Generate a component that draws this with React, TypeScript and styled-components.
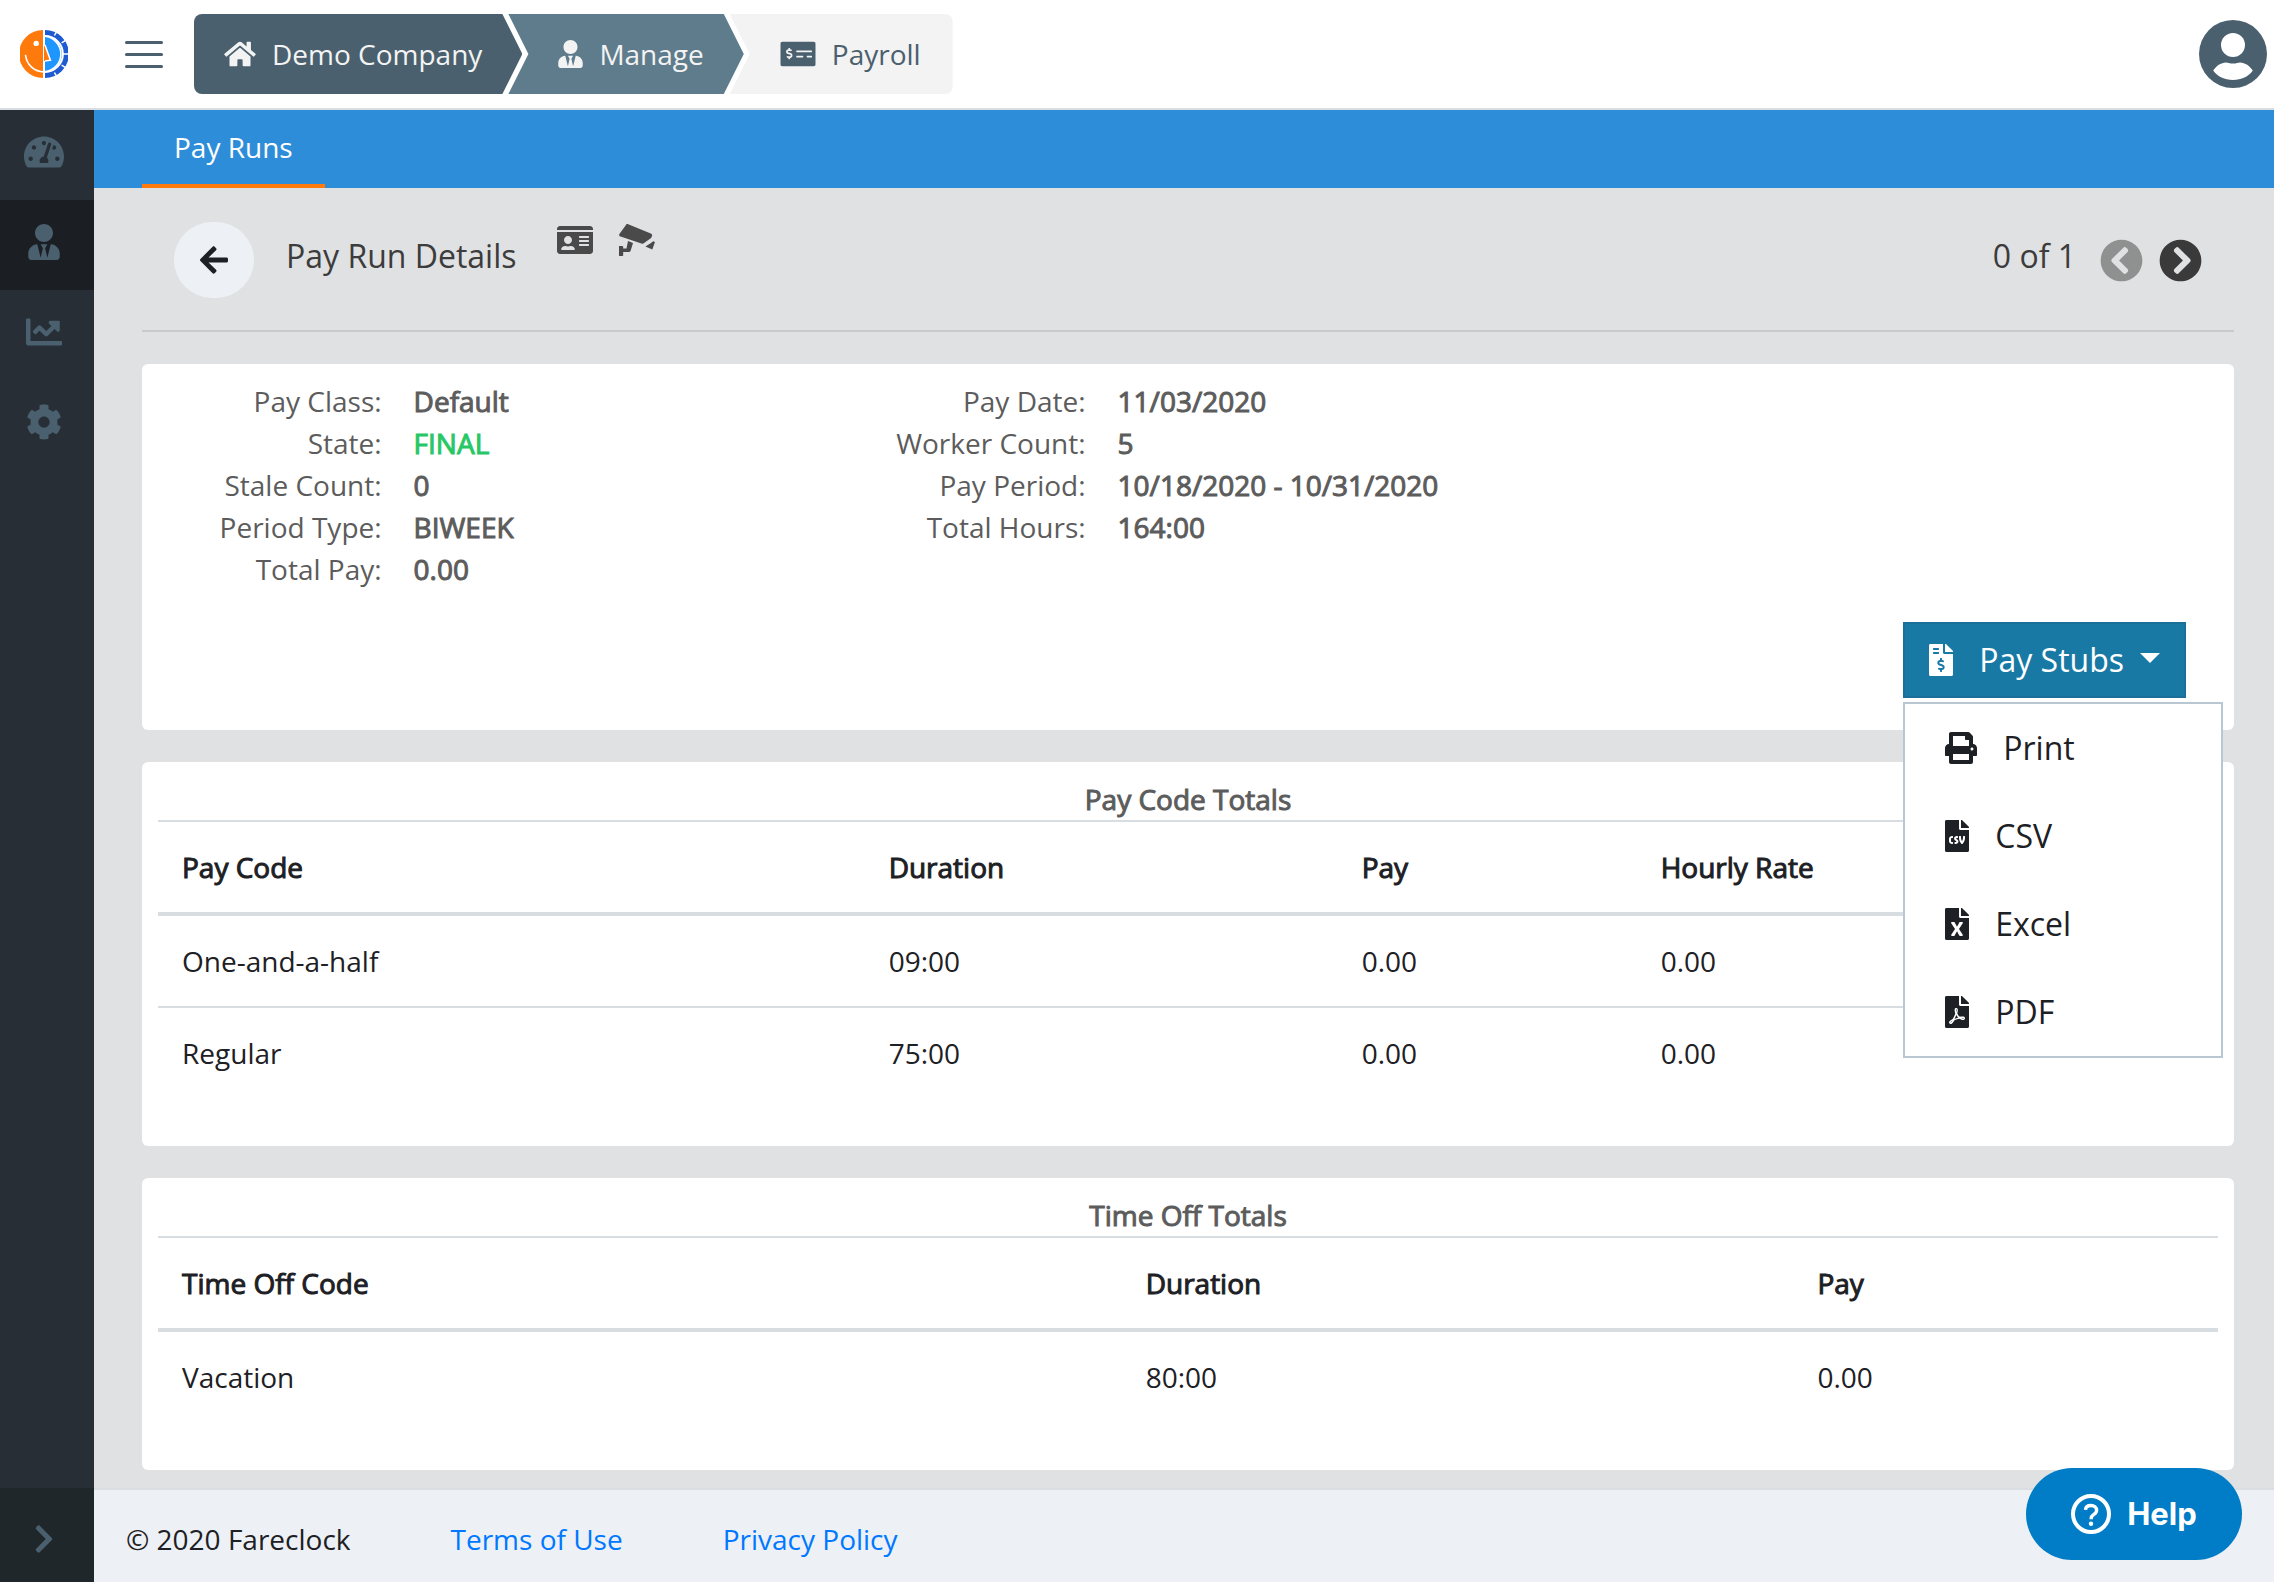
import React from "react";
import styled, { createGlobalStyle, css } from "styled-components";
import {
  FaArrowLeft,
  FaChartLine,
  FaChevronCircleLeft,
  FaChevronCircleRight,
  FaChevronRight,
  FaCog,
  FaFileCsv,
  FaFileExcel,
  FaFileInvoiceDollar,
  FaFilePdf,
  FaHome,
  FaIdCard,
  FaMoneyCheckAlt,
  FaPrint,
  FaTachometerAlt,
  FaUserTie,
} from "react-icons/fa";

const slate = "#4a606e";
const ink = "#1d2024";
const rule = "#d8dde2";

const GlobalStyle = createGlobalStyle`
  *, *::before, *::after { box-sizing: border-box; }
  body {
    margin: 0;
    background: #e0e1e3;
    color: ${ink};
    font: 400 28px/42px "Open Sans", "Noto Sans", sans-serif;
  }
  button { font: inherit; color: inherit; border: 0; padding: 0; background: none; cursor: pointer; }
  a { text-decoration: none; }
  svg { display: block; flex: none; }
`;

/* Emphasis drawn with the regular face, thickened by an outline. */
const emphasis = css`
  font-weight: 400;
  -webkit-text-stroke: 1px currentColor;
`;

/* Icons come in a square box; this gives each one the width of its drawing. */
const Glyph = styled.span<{ $width: number }>`
  display: block;
  flex: none;
  width: ${(p) => p.$width}px;
  svg { width: 100%; }
`;

const Page = styled.div`
  display: flex;
  flex-direction: column;
  min-height: 100vh;
`;

const TopBar = styled.header`
  display: flex;
  align-items: center;
  height: 110px;
  padding: 0 7px 0 20px;
  background: #fff;
  border-bottom: 2px solid ${rule};
`;

const MenuToggle = styled.button`
  display: grid;
  gap: 9px;
  width: 38px;
  margin: 0 31px 0 57px;
  span {
    height: 3px;
    border-radius: 2px;
    background: ${slate};
  }
`;

const Crumbs = styled.nav`
  display: flex;
  flex: 1;
`;

const Crumb = styled.a<{ $bg: string; $color: string; $place: "first" | "middle" | "last" }>`
  display: flex;
  align-items: center;
  gap: 16px;
  height: 80px;
  padding: 0 40px 0 50px;
  background: ${(p) => p.$bg};
  color: ${(p) => p.$color};
  ${(p) =>
    p.$place === "first" &&
    css`
      padding-left: 30px;
      border-radius: 8px 0 0 8px;
      clip-path: polygon(0 0, calc(100% - 20px) 0, 100% 50%, calc(100% - 20px) 100%, 0 100%);
    `}
  ${(p) =>
    p.$place === "middle" &&
    css`
      margin-left: -14px;
      clip-path: polygon(0 0, calc(100% - 20px) 0, 100% 50%, calc(100% - 20px) 100%, 0 100%, 20px 50%);
    `}
  ${(p) =>
    p.$place === "last" &&
    css`
      margin-left: -14px;
      padding-right: 32px;
      border-radius: 0 8px 8px 0;
      clip-path: polygon(0 0, 100% 0, 100% 100%, 0 100%, 20px 50%);
    `}
`;

const Body = styled.div`
  display: flex;
  flex: 1;
`;

const SideBar = styled.nav`
  display: flex;
  flex-direction: column;
  flex: none;
  width: 94px;
  background: #272e35;
  color: ${slate};
`;

const SideLink = styled.a<{ $active?: boolean }>`
  display: flex;
  align-items: center;
  justify-content: center;
  height: 90px;
  padding: 0 6px 6px 0;
  font-size: 36px;
  color: ${slate};
  background: ${(p) => (p.$active ? "#1b1f23" : "transparent")};
`;

const SideExpand = styled.button`
  display: flex;
  align-items: center;
  justify-content: center;
  height: 94px;
  margin-top: auto;
  padding: 8px 6px 0 0;
  font-size: 32px;
  color: ${slate};
  background: #20272a;
`;

const Main = styled.div`
  display: flex;
  flex-direction: column;
  flex: 1;
  min-width: 0;
`;

const TabBar = styled.nav`
  display: flex;
  height: 78px;
  padding: 0 48px;
  background: #2e8dd9;
`;

const Tab = styled.a`
  padding: 16px 32px;
  color: #fff;
  border-bottom: 4px solid #ff7a0d;
`;

const Content = styled.main`
  display: flex;
  flex-direction: column;
  flex: 1;
  gap: 32px;
  padding: 0 40px 18px 48px;
`;

const PageHead = styled.div`
  display: flex;
  align-items: center;
  padding: 34px 32px 32px;
  border-bottom: 2px solid #c8cacc;
  color: #3c3c3c;
`;

const BackButton = styled.button`
  display: grid;
  place-items: center;
  width: 80px;
  height: 76px;
  border-radius: 40px;
  background: #edf1f5;
  color: ${ink};
  font-size: 32px;
`;

const PageTitle = styled.h1`
  margin: 0 0 0 32px;
  padding-bottom: 8px;
  font-size: 32px;
  font-weight: 400;
  line-height: 48px;
`;

const HeadTools = styled.div`
  display: flex;
  align-self: flex-start;
  gap: 26px;
  margin-left: 41px;
  font-size: 32px;
  color: #4a4a4a;
  button { height: 36px; }
`;

const Pager = styled.div`
  display: flex;
  align-items: center;
  gap: 16px;
  margin-left: auto;
`;

const PagerText = styled.span`
  padding: 0 8px 8px 0;
  font-size: 32px;
  line-height: 48px;
`;

const PagerButton = styled.button`
  font-size: 43px;
  color: #3a3a3a;
  &:disabled { color: #8f9191; }
`;

const Card = styled.section`
  padding: 16px;
  border-radius: 6px;
  background: #fff;
`;

const Facts = styled.div`
  display: grid;
  grid-template-columns: repeat(3, 1fr);
  margin: 0 -26px 32px;
`;

const FactList = styled.dl`
  display: grid;
  grid-template-columns: 2fr 3fr;
  align-content: start;
  margin: 0;
  color: #5c5c5c;
  dt {
    padding-right: 32px;
    text-align: right;
  }
`;

const Fact = styled.dd<{ $good?: boolean }>`
  margin: 0;
  white-space: nowrap;
  color: ${(p) => (p.$good ? "#28c766" : "inherit")};
  ${emphasis}
`;

const Actions = styled.div`
  display: flex;
  justify-content: flex-end;
  padding: 0 32px 16px 0;
`;

const DropDown = styled.div`
  position: relative;
`;

const DropButton = styled.button`
  display: flex;
  align-items: center;
  height: 76px;
  padding: 0 24px;
  border: 2px solid #1a7098;
  background: #1979a5;
  color: #fff;
  font-size: 32px;
  line-height: 48px;
`;

const DropLabel = styled.span`
  margin: 0 16px 0 26px;
`;

const Caret = styled.i`
  margin-bottom: 4px;
  border: 10px solid transparent;
  border-top-color: #fff;
  border-bottom: 0;
`;

const Menu = styled.div`
  position: absolute;
  z-index: 2;
  top: calc(100% + 4px);
  left: 0;
  width: 320px;
  border: 2px solid #b8c7d2;
  background: #fff;
`;

const MenuItem = styled.button`
  display: flex;
  align-items: center;
  gap: 26px;
  width: 100%;
  height: 88px;
  padding: 0 40px;
  font-size: 32px;
  line-height: 48px;
`;

const CardTitle = styled.h2`
  margin: 0;
  font-size: 28px;
  text-align: center;
  color: #5c5c5c;
  ${emphasis}
`;

const Table = styled.table`
  width: 100%;
  margin-bottom: 32px;
  border-spacing: 0;
  text-align: left;
  th, td {
    padding: 24px;
    border-top: 2px solid ${rule};
  }
  th {
    border-bottom: 4px solid ${rule};
    ${emphasis}
  }
  tbody tr:first-child td { border-top: 0; }
`;

const Footer = styled.footer`
  display: flex;
  gap: 100px;
  height: 94px;
  padding: 28px 32px 0;
  border-top: 2px solid #dadee2;
  background: #edf1f5;
  a { color: #0078ff; }
`;

const HelpButton = styled.button`
  position: fixed;
  right: 32px;
  bottom: 22px;
  display: flex;
  align-items: center;
  justify-content: center;
  gap: 16px;
  width: 216px;
  height: 92px;
  border-radius: 46px;
  background: #007dc6;
  color: #fff;
  font: 700 31px/40px Inter, "Liberation Sans", sans-serif;
`;

const Logo = () => (
  <svg width="48" height="48" viewBox="0 0 48 48" role="img" aria-label="Fareclock">
    <path d="M23 0a24 24 0 0 0 0 48z" fill="#ff7a0d" />
    <path d="M25 2.6A21.4 21.4 0 0 1 25 45.4" fill="none" stroke="#1f5bd0" strokeWidth="5" />
    <path
      d="M34.4 5.5l1.8-3.2M41.6 12.8l4-2.4M43 24h5M41.6 35.2l4 2.4M34.4 42.5l1.8 3.2"
      stroke="#fff"
      strokeWidth="1.5"
    />
    <path d="M25 7a17 17 0 0 1 0 34z" fill="#1e96ff" />
    <path d="M25 6.3A17.8 17.8 0 0 1 25 41.7" fill="none" stroke="#fff" strokeWidth="1.6" />
    <path d="M24 15l1 0 5.400 15.200-5.400.8-1 0z" fill="#ff7a0d" />
    <path d="M25 15l5.400 15.200-5.400.8" fill="none" stroke="#fff" strokeWidth="1.5" />
    <path d="M5.6 25.5C7 35 14 41.8 24 42" fill="none" stroke="#fff" strokeWidth="1.7" strokeLinecap="round" />
    <path d="M24 0v16M24 31v17" stroke="#fff" strokeWidth="1.8" />
    <circle cx="16.2" cy="13.4" r="2.7" fill="#fff" />
  </svg>
);

const Avatar = () => (
  <svg width="68" height="68" viewBox="0 0 68 68" aria-hidden="true">
    <circle cx="34" cy="34" r="34" fill={slate} />
    <circle cx="34" cy="25" r="12" fill="#fff" />
    <path
      d="M14.2 50.5C17 46 22 42.4 27 42.4c2 0 3.600 1.200 7 1.200s5-1.200 7-1.200c5 0 10 3.600 12.800 8.100C49.500 56.500 42.500 60 34 60s-15.500-3.500-19.800-9.500z"
      fill="#fff"
    />
  </svg>
);

const Camera = () => (
  <svg width="36" height="36" viewBox="0 0 36 36" fill="currentColor" aria-hidden="true">
    <path d="M6.600 3.400C7.200 2.200 8 1.800 9.200 2.300L31.800 11.400c1.300.6 1.700 1.500 1.200 2.700l-.9 2-7 5c-.9.6-1.700.7-2.700.3L1.500 14.500C.3 13.900-.2 13.200.4 12z" />
    <path d="M34.200 19.300l1.800.8-2.700 7.400-6.900-2.900 5.200-3.300z" />
    <path d="M9 19l5 2-2.200 7.200c-.4 1.300-1 1.900-2.400 1.900H4.200v2.900c0 .7-.4 1-1.100 1H0V24h3.100c.7 0 1.100.4 1.100 1.100v1.400H7.500z" />
  </svg>
);

const Question = () => (
  <svg width="40" height="40" viewBox="0 0 40 40" fill="none" stroke="currentColor" aria-hidden="true">
    <circle cx="20" cy="20" r="18" strokeWidth="4" />
    <path
      d="M14.500 15.800c.2-2.700 2.300-4.300 5.500-4.300s5.600 1.800 5.600 4.700c0 2-1 3.100-2.700 4.200-1.900 1.200-2.700 2-2.700 3.800v1"
      strokeWidth="3.400"
    />
    <circle cx="20" cy="29.800" r="2.200" fill="currentColor" stroke="none" />
  </svg>
);

const leftFacts = [
  ["Pay Class:", "Default"],
  ["State:", "FINAL"],
  ["Stale Count:", "0"],
  ["Period Type:", "BIWEEK"],
  ["Total Pay:", "0.00"],
];

const rightFacts = [
  ["Pay Date:", "11/03/2020"],
  ["Worker Count:", "5"],
  ["Pay Period:", "10/18/2020 - 10/31/2020"],
  ["Total Hours:", "164:00"],
];

const exportsList = [
  { label: "Print", Icon: FaPrint, width: 32 },
  { label: "CSV", Icon: FaFileCsv, width: 24 },
  { label: "Excel", Icon: FaFileExcel, width: 24 },
  { label: "PDF", Icon: FaFilePdf, width: 24 },
];

const sideLinks = [
  { label: "Dashboard", Icon: FaTachometerAlt, width: 40 },
  { label: "Manage", Icon: FaUserTie, width: 32, active: true },
  { label: "Reports", Icon: FaChartLine, width: 36 },
  { label: "Settings", Icon: FaCog, width: 36 },
];

const FactColumn = ({ rows }: { rows: string[][] }) => (
  <FactList>
    {rows.map(([label, value]) => (
      <React.Fragment key={label}>
        <dt>{label}</dt>
        <Fact $good={value === "FINAL"}>{value}</Fact>
      </React.Fragment>
    ))}
  </FactList>
);

const TotalsCard = ({ title, columns, rows }: { title: string; columns: string[]; rows: string[][] }) => (
  <Card>
    <CardTitle>{title}</CardTitle>
    <Table aria-label={title}>
      <thead>
        <tr>
          {columns.map((c) => (
            <th key={c} scope="col">{c}</th>
          ))}
        </tr>
      </thead>
      <tbody>
        {rows.map((row) => (
          <tr key={row[0]}>
            {row.map((cell, i) => (
              <td key={i}>{cell}</td>
            ))}
          </tr>
        ))}
      </tbody>
    </Table>
  </Card>
);

export default function App() {
  const [open, setOpen] = React.useState(true);
  return (
    <Page>
      <GlobalStyle />
      <TopBar>
        <Logo />
        <MenuToggle aria-label="Toggle menu">
          <span />
          <span />
          <span />
        </MenuToggle>
        <Crumbs aria-label="Breadcrumb">
          <Crumb href="#" $bg={slate} $color="#f3f3f3" $place="first">
            <Glyph $width={32}>
              <FaHome />
            </Glyph>
            Demo Company
          </Crumb>
          <Crumb href="#" $bg="#5e7c8b" $color="#f3f3f3" $place="middle">
            <Glyph $width={25}>
              <FaUserTie />
            </Glyph>
            Manage
          </Crumb>
          <Crumb href="#" $bg="#f3f3f3" $color={slate} $place="last">
            <Glyph $width={36}>
              <FaMoneyCheckAlt />
            </Glyph>
            Payroll
          </Crumb>
        </Crumbs>
        <button aria-label="Account">
          <Avatar />
        </button>
      </TopBar>
      <Body>
        <SideBar aria-label="Main">
          {sideLinks.map(({ label, Icon, width, active }) => (
            <SideLink key={label} href="#" aria-label={label} $active={active}>
              <Glyph $width={width}>
                <Icon />
              </Glyph>
            </SideLink>
          ))}
          <SideExpand aria-label="Expand sidebar">
            <FaChevronRight />
          </SideExpand>
        </SideBar>
        <Main>
          <TabBar>
            <Tab href="#">Pay Runs</Tab>
          </TabBar>
          <Content>
            <PageHead>
              <BackButton aria-label="Back">
                <FaArrowLeft />
              </BackButton>
              <PageTitle>Pay Run Details</PageTitle>
              <HeadTools>
                <button aria-label="Worker card">
                  <Glyph $width={36}>
                    <FaIdCard />
                  </Glyph>
                </button>
                <button aria-label="Camera">
                  <Camera />
                </button>
              </HeadTools>
              <Pager>
                <PagerText>0 of 1</PagerText>
                <PagerButton aria-label="Previous" disabled>
                  <FaChevronCircleLeft />
                </PagerButton>
                <PagerButton aria-label="Next">
                  <FaChevronCircleRight />
                </PagerButton>
              </Pager>
            </PageHead>
            <Card>
              <Facts>
                <FactColumn rows={leftFacts} />
                <FactColumn rows={rightFacts} />
              </Facts>
              <Actions>
                <DropDown>
                  <DropButton aria-haspopup="menu" aria-expanded={open} onClick={() => setOpen(!open)}>
                    <Glyph $width={24}>
                      <FaFileInvoiceDollar />
                    </Glyph>
                    <DropLabel>Pay Stubs</DropLabel>
                    <Caret />
                  </DropButton>
                  {open && (
                    <Menu role="menu">
                      {exportsList.map(({ label, Icon, width }) => (
                        <MenuItem key={label} role="menuitem">
                          <Glyph $width={width}>
                            <Icon />
                          </Glyph>
                          {label}
                        </MenuItem>
                      ))}
                    </Menu>
                  )}
                </DropDown>
              </Actions>
            </Card>
            <TotalsCard
              title="Pay Code Totals"
              columns={["Pay Code", "Duration", "Pay", "Hourly Rate"]}
              rows={[
                ["One-and-a-half", "09:00", "0.00", "0.00"],
                ["Regular", "75:00", "0.00", "0.00"],
              ]}
            />
            <TotalsCard
              title="Time Off Totals"
              columns={["Time Off Code", "Duration", "Pay"]}
              rows={[["Vacation", "80:00", "0.00"]]}
            />
          </Content>
          <Footer>
            <span>© 2020 Fareclock</span>
            <a href="#">Terms of Use</a>
            <a href="#">Privacy Policy</a>
          </Footer>
        </Main>
      </Body>
      <HelpButton>
        <Question />
        Help
      </HelpButton>
    </Page>
  );
}
